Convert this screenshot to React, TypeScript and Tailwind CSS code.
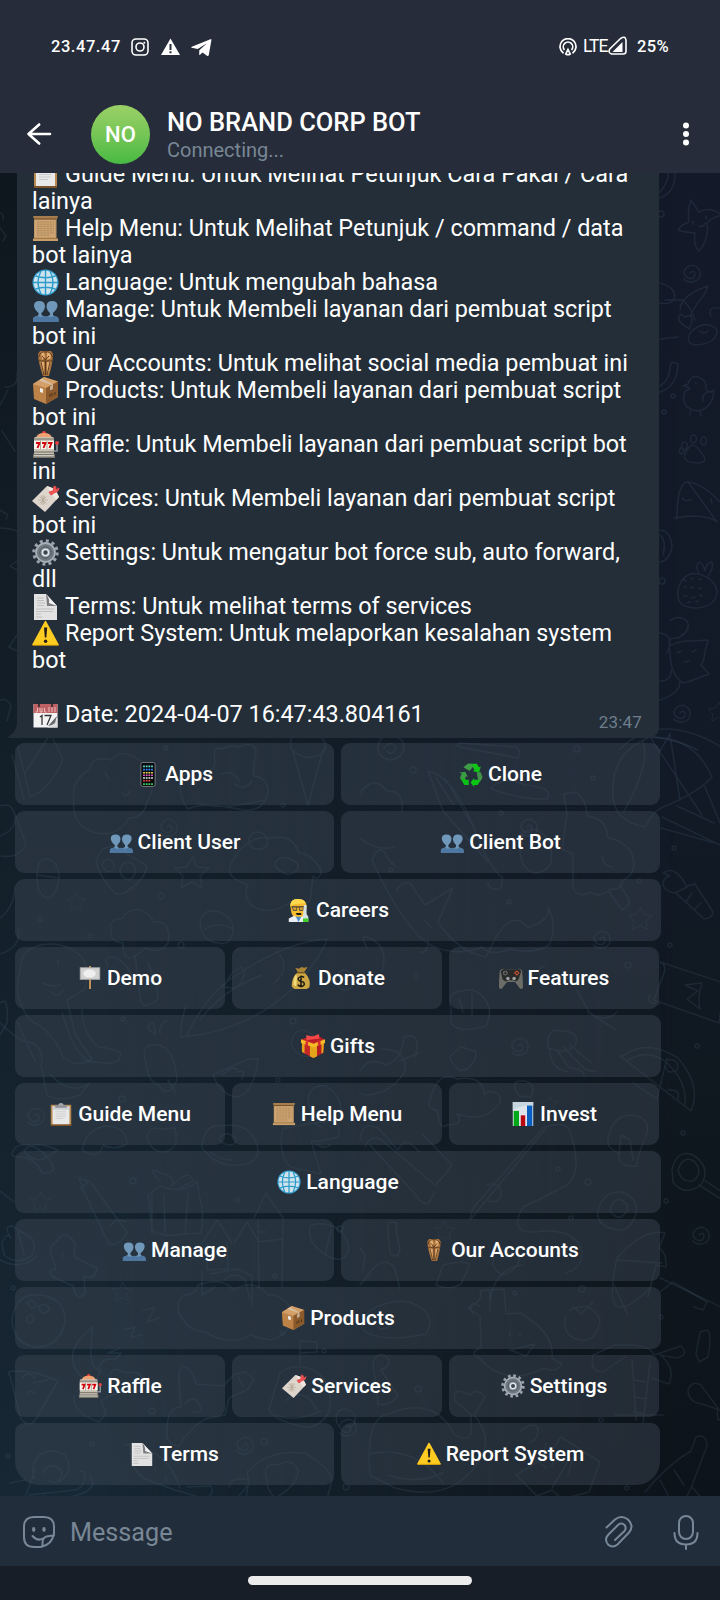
import type { ReactNode } from "react";

const emojis: Record<string, ReactNode> = {
  clipboard: (
    <>
      <rect x="2" y="3" width="23" height="24" rx="1" fill="#b98a50" />
      <rect x="2" y="25" width="23" height="2" fill="#7d532a" />
      <rect x="4" y="5" width="19" height="20" fill="#e9e9e9" />
      <path d="M4 5h19v4H4z" fill="#cfd0d3" />
      <path d="M7 11h12M7 13.5h12M7 16h12M7 18.5h9" stroke="#c2c2c2" strokeWidth="0.8" />
      <path d="M7 3.500h13v3H7z" fill="#8d9098" />
      <path d="M10.500 4a3 3 0 0 1 6 0z" fill="#a5a8b0" />
    </>
  ),
  scroll: (
    <>
      <path d="M2 2h22.500v23H2z" fill="#c39a66" />
      <path d="M3 5h20v17H3z" fill="#cda574" />
      <path d="M1 1h25l-1 3H2z" fill="#a67d4c" />
      <path d="M2 4h22" stroke="#6b4a26" strokeWidth="1" />
      <path d="M1 23.500h25V26H1z" fill="#c99f69" />
      <path d="M2 23.500h23" stroke="#8a6336" strokeWidth="0.6" />
      <path d="M5 7h17M5 9.200h17M5 11.400h17M5 13.600h17M5 15.800h17M5 18h17M5 20.200h13" stroke="#a07b4a" strokeWidth="0.7" strokeDasharray="2.500 0.700" />
    </>
  ),
  globe: (
    <>
      <circle cx="13.500" cy="13.500" r="13" fill="#39a3d3" />
      <circle cx="13.500" cy="13.500" r="11.800" fill="#cfe3ec" />
      <path d="M13.500 1v25M1 13.500h25M3.500 7q10 3.500 20 0M3.500 20q10-3.500 20 0M9 2Q3 13.500 9 25M18 2q6 11.500 0 23" fill="none" stroke="#2d9ccb" strokeWidth="1.400" />
    </>
  ),
  people: (
    <>
      <path d="M1 26v-3q0-2 4-3l1.500-1v-2Q2 13 2 9.500 2 5 7.500 5q5 0 5.500 5 0 4-3.500 7v2l4 2v5z" fill="#6f98bb" />
      <path d="M26.500 26v-3q0-2-4-3L21 19v-2q4.500-4 4.500-7.500Q25.500 5 20 5q-5 0-5.500 5 0 4 3.500 7v2l-4 2v5z" fill="#6f98bb" />
      <path d="M1 26v-3q0-2 4-3l4 1 4.500-1 4.500 1 4.500-1q4 1 4 3v3z" fill="#4e77a2" />
    </>
  ),
  urn: (
    <>
      <path d="M8 1h11l2 3q0 8-4 22h-6Q6 12 6 4z" fill="#a8713c" />
      <path d="M9 2h3l1 5-3 3zM15 2h3l1 6-4 2zM8 11l4 1v12h-1zM15 12l4-1-3 13h-1z" fill="#e2ad70" />
      <path d="M6.500 7q2-6 7-5 5-1 7 5M10 6l3.500 4L17 6M7 11h13M13.500 11v14M9 12l3 13M18 12l-3 13" stroke="#50311a" fill="none" strokeWidth="0.9" />
    </>
  ),
  box: (
    <>
      <path d="M1 7L12 0l14 4.500V20l-12 7L2 22z" fill="#bd8248" />
      <path d="M1 7L12 0l14 4.500L14 11z" fill="#d4a069" />
      <path d="M14 11l12-6.500V20l-12 7z" fill="#8b5a2c" />
      <path d="M7 3.500L20 8l-2 1.500v4l3-1.500V7.500L10 1.500z" fill="#d8cbb8" opacity=".75" />
      <path d="M8 11l3 1v4l-3-1z" fill="#eee" />
      <path d="M18 20v-3m2 2v-3m3 2v-3" stroke="#4c2e14" strokeWidth="1" />
    </>
  ),
  slot: (
    <>
      <circle cx="12" cy="2" r="2" fill="#ef4136" />
      <path d="M4 7q1-5 8-5t8 5z" fill="#f0a070" />
      <rect x="2" y="6" width="20" height="19" rx="1.500" fill="#c9c3b5" />
      <path d="M2 8h20M2 21h20" stroke="#6f6a5d" />
      <rect x="2" y="10" width="20" height="8" fill="#f7f4ee" />
      <path d="M4 12h3.500l-2 5M10 12h3.500l-2 5M16 12h3.500l-2 5" stroke="#d5000a" strokeWidth="1.900" fill="none" />
      <path d="M8.500 10v8M15 10v8" stroke="#85806f" strokeWidth=".7" />
      <path d="M22 20h3v-7" stroke="#9298a0" strokeWidth="1.500" fill="none" />
      <circle cx="25" cy="12" r="1.900" fill="#e33e40" />
      <path d="M1 23h22v4H1z" fill="#77756c" />
      <path d="M2 24h20v1.500H2z" fill="#c9c7bc" />
    </>
  ),
  tag: (
    <>
      <path d="M15 1l8 3 4 8-14 15L0 16z" fill="#ded6cd" />
      <path d="M15 1l8 3 4 8-3 3z" fill="#eee8e0" />
      <path d="M11 10v10M6 15h10M7.500 11.500l7 7M14.500 11.500l-7 7M9 10.500l4 9M13 10.500l-4 9" stroke="#b9ab99" strokeWidth=".8" />
      <path d="M17 7l4-1 1-5 2 1v3l3-2-1 3-4 2-3 2z" fill="#f15555" stroke="#e34949" />
    </>
  ),
  gear: (
    <>
      <circle cx="13.500" cy="13.500" r="11.700" fill="none" stroke="#9ba4ae" strokeWidth="3" strokeDasharray="3 3.120" />
      <circle cx="13.500" cy="13.500" r="9.500" fill="#6f7780" stroke="#a9b1b9" strokeWidth="1.800" />
      <circle cx="13.500" cy="13.500" r="5.500" fill="#8f9da9" stroke="#454b52" />
      <circle cx="13.500" cy="13.500" r="3" fill="#3a444d" stroke="#e2e7eb" strokeWidth="1.500" />
    </>
  ),
  page: (
    <>
      <path d="M2 1h12l11 12v14H2z" fill="#e2e2e2" />
      <path d="M14 1l11 12H15z" fill="#7b7d80" />
      <path d="M14 1q4 5 3 9l8 3z" fill="#f5f5f5" />
      <path d="M5 5h7M5 7.500h7M5 10h8M5 12.500h7M4 16h18M4 18.500h17M4 21h5M4 24h6" stroke="#b8b8b8" strokeWidth=".8" />
    </>
  ),
  warning: (
    <>
      <path d="M13.500 1.500L26 24.500H1z" fill="#ffcc22" stroke="#ffcc22" strokeLinejoin="round" strokeWidth="1.500" />
      <path d="M0.500 25h26" stroke="#eeb000" strokeWidth="1" />
      <path d="M12 7.500h3.200l-.8 10h-1.600z" fill="#211d1b" />
      <circle cx="13.600" cy="21.300" r="1.700" fill="#211d1b" />
    </>
  ),
  calendar: (
    <>
      <rect x="1.500" y="3" width="24" height="23.500" fill="#f3f3f3" />
      <path d="M1.500 3h24v9h-24z" fill="#bd6164" />
      <path d="M5.500 7v4h-2M8 7v4h2V7M12.500 7v4h2M17 6v5M20 6v5M23 6v5" stroke="#f2c7c4" strokeWidth=".9" fill="none" />
      <path d="M7 1v5M20 1v5" stroke="#27272a" strokeWidth="1.600" />
      <path d="M8 16l2-1.500V24M12.500 14.500H19L15 24" stroke="#333" fill="none" strokeWidth="1.300" />
      <path d="M15 26.500q8-2 10.500-10v10z" fill="#ddd" />
      <path d="M16 25l9-10-2 7-3 2z" fill="#66696d" />
    </>
  ),
  phone: (
    <>
      <rect x="5.500" y="0.500" width="16" height="27" rx="2" fill="#090a0d" stroke="#7e8389" />
      <path d="M8 5h12" stroke="#5ee0d2" strokeWidth="2" strokeDasharray="2 1" />
      <path d="M8 8.500h12" stroke="#2d8cff" strokeWidth="2" strokeDasharray="2 1" />
      <path d="M8 12h12" stroke="#f4de4e" strokeWidth="1.600" strokeDasharray="2 1" />
      <path d="M8 15h12" stroke="#e55ac8" strokeWidth="1.600" strokeDasharray="2 1" />
      <path d="M8 18h12" stroke="#f2f2f2" strokeWidth="1.600" strokeDasharray="2 1" />
      <path d="M8 21h8" stroke="#e84838" strokeWidth="1.600" strokeDasharray="2 1" />
      <path d="M8 25h12" stroke="#33d45f" strokeWidth="2" strokeDasharray="2 1" />
    </>
  ),
  recycle: (
    <>
      <path d="M10 2h10l2.500 4 2-1-2 7-7-2 2-1-3-5z" fill="#0fc417" />
      <path d="M6 5l4-3h4l2 3-4 5-7-4z" fill="#3f9c46" />
      <path d="M24 15l2 3-5 8h-4v2l-4-5 4-5v2h4z" fill="#0cc414" />
      <path d="M20 12l4-1 2.500 6-2 4-3-1z" fill="#43914a" />
      <path d="M11 20v6H6l-4-7h5l1 1z" fill="#0dbe17" />
      <path d="M0 12l7-1 3 6-2-1-1.500 3H2l-1-1 2-5z" fill="#3c9c43" />
    </>
  ),
  scientist: (
    <>
      <path d="M4 10Q3 1 12 1q10 0 10 9l-1 7q-3 6-8 6-6 0-8-6z" fill="#f6bd2f" />
      <path d="M4 10Q3 1 12 1q8 0 9 5L7 7z" fill="#ffd94d" />
      <path d="M5 10h15" stroke="#604422" strokeWidth="1.500" />
      <path d="M6 10h5v4H7zM14 10h5l-1 4h-4z" fill="#d99d2c" stroke="#49494b" />
      <path d="M10 17h6v2h-5z" fill="#1b1716" />
      <path d="M2 27v-4l6-3 5 3 5-3 5 3v4z" fill="#e9edf2" />
      <path d="M10 21l3 6 3-6" fill="#4d91cb" />
      <path d="M19 8h3v10l2 3v6h-6v-7z" fill="#d5e0e2" />
      <path d="M18 23h6v4h-6z" fill="#41d12a" />
    </>
  ),
  placard: (
    <>
      <path d="M13.500 0v26" stroke="#c49358" strokeWidth="2.200" />
      <rect x="2.500" y="2" width="22" height="13" fill="#d2d2d2" stroke="#a9a9a9" />
      <ellipse cx="13" cy="8.500" rx="7" ry="4.500" fill="#efefef" />
    </>
  ),
  money: (
    <>
      <path d="M7 2l4 1 3-2 3 1 4-1-4 6h-7z" fill="#ad8635" />
      <path d="M9 8h9q7 7 5 16l-3 2H6l-3-3Q3 13 9 8z" fill="#cda644" />
      <path d="M8 9q-3 4-3 12l3 2 1-10z" fill="#f1dc79" />
      <path d="M9 7.500h9" stroke="#6e5420" strokeWidth="1.500" />
      <path d="M17 13q-2-2-5-.5t-1 3.500 5 2q3 3-1 5-4 0-5-2M13.500 11v13" fill="none" stroke="#1d1b15" strokeWidth="1.700" />
    </>
  ),
  gamepad: (
    <>
      <path d="M1 5q3-3 7-1h11q4-2 7 1 1 11 1 20l-3 1-6-8H9l-6 8-3-1Q0 12 1 5z" fill="#6b6d66" />
      <path d="M2 6q3-4 7-2h9q5-2 7 2l-3 9q-3 4-6 1h-5q-4 3-7-1z" fill="#292b29" />
      <circle cx="7" cy="8" r="2.700" fill="#74797a" />
      <path d="M7 6v4M5 8h4" stroke="#202020" />
      <circle cx="20" cy="8" r="2.700" fill="#ca5634" />
      <path d="M18 6l4 4M22 6l-4 4" stroke="#2b2725" />
      <circle cx="10" cy="14" r="2" fill="#9da1a1" />
      <circle cx="17" cy="14" r="2" fill="#9da1a1" />
    </>
  ),
  gift: (
    <>
      <path d="M1 6l12-4 13 4-1 15-11 6-12-6z" fill="#c52626" />
      <path d="M14 11v16l11-6 1-15z" fill="#b51e22" />
      <path d="M1 8l3 2v12l-3-2zM10 12l4 1 4-1v13l-4 2-4-2zM23 9l3-1-1 13-2 1z" fill="#e5a51b" />
      <path d="M0 6v4l14 5 13-5V6L14 11z" fill="#f5bc28" />
      <path d="M5 9l3-2v6l-3-1zM19 7l3 1v4l-3 1z" fill="#d92d31" />
      <path d="M4 6l6-2 4 1 7-2 4 2-7 3-4 1z" fill="#b71d26" />
      <path d="M6 1l7 2 7-3 1 5-7 1-8 1z" fill="#f34949" />
    </>
  ),
  chart: (
    <>
      <path d="M2 0h23v27H2z" fill="#dce5eb" />
      <path d="M2 0h23v4q-13-1-23 5z" fill="#c6d5df" />
      <path d="M3 10h6v17H3z" fill="#00a818" />
      <path d="M11 15h5v12h-5z" fill="#b90812" />
      <path d="M18 4h6v23h-6z" fill="#075fc1" />
    </>
  ),
};

function Emoji({ name, className }: { name: string; className: string }) {
  return (
    <svg viewBox="0 0 27 27" className={`${className} shrink-0 overflow-visible`} aria-hidden="true">
      {emojis[name]}
    </svg>
  );
}

const lines: { icon?: string; text: string }[] = [
  { icon: "clipboard", text: "Guide Menu: Untuk Melihat Petunjuk Cara Pakai / Cara" },
  { text: "lainya" },
  { icon: "scroll", text: "Help Menu: Untuk Melihat Petunjuk / command / data" },
  { text: "bot lainya" },
  { icon: "globe", text: "Language: Untuk mengubah bahasa" },
  { icon: "people", text: "Manage: Untuk Membeli layanan dari pembuat script" },
  { text: "bot ini" },
  { icon: "urn", text: "Our Accounts: Untuk melihat social media pembuat ini" },
  { icon: "box", text: "Products: Untuk Membeli layanan dari pembuat script" },
  { text: "bot ini" },
  { icon: "slot", text: "Raffle: Untuk Membeli layanan dari pembuat script bot" },
  { text: "ini" },
  { icon: "tag", text: "Services: Untuk Membeli layanan dari pembuat script" },
  { text: "bot ini" },
  { icon: "gear", text: "Settings: Untuk mengatur bot force sub, auto forward," },
  { text: "dll" },
  { icon: "page", text: "Terms: Untuk melihat terms of services" },
  { icon: "warning", text: "Report System: Untuk melaporkan kesalahan system" },
  { text: "bot" },
  { text: "" },
  { icon: "calendar", text: "Date: 2024-04-07 16:47:43.804161" },
];

const rows: [string, string][][] = [
  [["phone", "Apps"], ["recycle", "Clone"]],
  [["people", "Client User"], ["people", "Client Bot"]],
  [["scientist", "Careers"]],
  [["placard", "Demo"], ["money", "Donate"], ["gamepad", "Features"]],
  [["gift", "Gifts"]],
  [["clipboard", "Guide Menu"], ["scroll", "Help Menu"], ["chart", "Invest"]],
  [["globe", "Language"]],
  [["people", "Manage"], ["urn", "Our Accounts"]],
  [["box", "Products"]],
  [["slot", "Raffle"], ["tag", "Services"], ["gear", "Settings"]],
  [["page", "Terms"], ["warning", "Report System"]],
];

const rowWidths = ["", "w-[646px]", "w-[645px]", "w-[644px]"];

const swirls = [
  [690, 273], [680, 713], [527, 827], [167, 827], [600, 939], [34, 1116], [518, 1046], [699, 1235],
  [243, 1445], [346, 1427],
];
const stars = [
  [193, 873, 1], [77, 902, 0.55], [641, 919, 0.7], [41, 1202, 0.6], [123, 1292, 0.6], [445, 1231, 0.6], [719, 712, 0.6], [550, 1104, 0.5],
];
const dots = [
  [661, 214], [673, 396], [664, 412], [662, 581], [166, 748], [283, 805], [577, 749], [593, 778], [501, 813], [413, 770],
  [674, 848], [391, 870], [161, 896], [40, 919], [90, 936], [181, 945], [509, 902], [670, 945], [628, 965], [416, 976], [123, 1019],
  [293, 1021], [639, 881], [278, 1080], [122, 1099], [697, 1046], [683, 1133], [133, 1181], [238, 1200], [558, 1169], [588, 1182],
  [666, 1201], [571, 1218], [340, 1229], [13, 1288], [275, 1276], [582, 1289], [282, 1333], [324, 1351], [152, 1411], [92, 1444],
  [8, 1456], [264, 1442], [661, 1317], [601, 1420], [346, 1487], [627, 1488], [515, 1293], [418, 1389],
];

const doodles = [
  // right edge
  "M660 198q16-6 15-27M668 170q2 10-8 22",
  "M691 200l8 12q10-6 23 3-11 3-15 8 2 17-8 28-6-6-4-18-9 0-17-3 3-5 11-8-2-12 2-22zM693 221v3M706 216v3M699 226q4 2 6-3",
  "M660 283q18 5 14 17-5 5-14 3M665 300h18q8 7 12 20M680 310q1-15 28-24-2 8-10 16-5 9-8 14M660 339l18-2M695 345q-10-2-5-12 13-14 27-4 1 15-22 16zM690 329q-16-8-9-15l4 3 6-2q2 7-1 12M700 331q4 4 8 0M711 316q-4-10 9-8",
  "M660 392q17-5 18-28-7-4-8 2 0 14-10 20",
  "M688 384q2-9 10-7 9 2 8 13 5 4 8 0-1 19-17 21-16-3-13-17 2-5 6-5l-2-2-5-1zM696 382v2M690 411v4M700 411l1 5M713 391q-12 1-10 10",
  "M686 452q6-13 14-1 11 12-3 12-17-1-11-11zM684 442a3 4 0 1 0 1 0M693 435a3 4 0 1 0 1 0M703 437a3 4 0 1 0 1 0M681 448a2 3 0 1 0 1 0",
  "M677 519q0-39 12-37 14 2 31 20M688 482q21 29 29 40-7-6-27-6l-16 2M682 498q4 5 9 1M711 499l1 4",
  "M678 590q5-19 21-16 18 6 18 19-2 14-21 15-21 0-18-18zM698 572q-3-8 2-10 3 2 5 9 1-8 7-9 2 6-4 14M684 580l2 1m5-3l2 1m6 0l2 1m-17 8l2-2m5 2l2-1m6 2l2-1m-17 8l3 0m5 2l3-1m5-2l2 1m-15 7l3-1m6 0l2-1",
  "M660 530q11 1 12 17-3 14-12 15M660 535q7 6 3 20",
  "M670 653l-1-7q14-6 24-5l15-1-3 12q-1 10-4 13l8 9-8 3q-12 5-18 6-12-7-13-30zM677 653l4-2M685 662l4-1M692 652l4-2M670 645q-4-8 8-7 14-8 9-17-9-7-17 0M660 633q15 2 7 20M660 681q12 0 11-11M660 700q20-7 20-18",
  "M620 749q40-40 105 0M660 751l10-17M600 737q60-6 98 13",
  // balloons and umbrellas by the first rows
  "M613 785q2-34 37-48 44-1 62 40-12 14-44 28-14 4-23 22-36-6-32-42zM643 741q8 23-20 72M650 737l52 78M670 735l10 65M662 817l60 29M705 787l15 36M677 806l37 17M661 828l61 17",
  "M12 755l12 44M0 806q11-4 14 7 5 15-14 23M15 814l11 30q-7 15-25 12",
  "M18 747l12 50q21-8 33-38l-10-20M25 773l24-37",
  "M74 801q-4-20 16-32 2-14 21-9 11-13 28 0 13 3 14 22-1 12-6 20-3 16-18 16-12 21-36 14-22-8-19-31zM105 772l5 9M122 793q4 6 9-2",
  "M215 762q-3-18 7-13 10-5 18-2 13-6 16 3-3 18-2 26 14 2 14 16-4 20-25 18-39-9-55-1-9-12-8-27 4-14 19-9 16-1 16-11M222 774q12-5 17 8M235 784q9 8 17-3M198 803q25 8 65-3",
  "M291 749q-3-19 13-17 10-4 15 4 11 7 3 18-16 9-31-5zM293 752l15 53 15-55",
  "M360 793q14-19 27-2 17-1 15 20M360 838q17 14 34 9M378 747q2-13 14-12 15 4 11 17-9 12-19 6-7-4-6-11zM384 748q7-9 12 0-4 9-9 3",
  "M428 771q30 7 54 78 14 25 20 28 2 15-9 12-5-2-5-6M428 771l15 40 45 51M445 778l30 52M436 778l17 26",
  "M460 743l56 4q5 2 2 11l-58-11q-5-2 0-4zM490 788q15-13 35-3 30 3 22 14-29 1-57-11zM512 770l7 8 10-6",
  "M564 794l3 20-5 35 11 5v34q6 11 18 4 8 7 20-3 10 2 12-9 15-6 9-26-6-12-25-17 1-18-20-21 0-16-11-24zM608 890l14 20q8-4 7-11l-10-15M613 867q-11-1-10-10",
  "M520 846q2-20 16-16 19 7 15 33-6 10-17 10-15-5-14-27z",
  "M96 862q5-18 20-15l31 19q-3 15-21 26-7 4-12 0-14-14-18-30zM102 865q2-7 8-5 7 4 3 10-7 5-11-5zM120 870q4-13 14-5 4 11-5 15-9-2-9-10z",
  "M37 875q0-17 11-16 11 3 11 19-3 20-12 20-11-4-10-23zM37 875l22 3",
  "M231 864q15-30 40-26 21-5 28 15 12 0 22 17-1 12-8 6l-3 25q-10 7-14-3-25 21-45 7-8-10-3-20-24-8-17-21zM250 846q-4-14 9-14 12 4 7 15-9 5-16-1zM275 866q1-10 13-8 14 6 9 12-10 10-22-4z",
  "M663 873q12-9 24 14l-12 6q-9-1-12-8 0-8 7-9zM687 886l8-2 18 28q0 6-9 7l-28-26M692 893l-6 9M701 903l-7 7",
  "M396 891q6-10 14-8l15 22 28-17-15 34q20 30 48 35l10-20q18-28 32-9 22-8 20-20 10 17 1 37-16 10-39 4-19 8-28-2-24 10-50-1-28-16-60-86 8-20 16-1l8 8M424 920l7 7M420 952q8 2 8-12",
  "M111 931q-3-12 12-13 4-10 18-8 12 6 12 12 19-2 15 21-9 12-23 5-22 22-22-5-14-2-12-12zM135 955l5 42q2 13 12 6 9-2 4-17l-8-23M108 966q-6-10 5-9 17 6 20 25",
  "M200 921q5-14 19-9 16 6 14 20-3 14-14 11-18-1-19-22zM205 929q13-8 28 0",
  "M186 1037q16-34 40-55 59-41 101-43-3 12-25 40-48 52-121 58-2-8 5-32M200 1020q22-30 62-45M232 973l9-6q7 5-1 17l-5 4-12-1zM280 955q10 15-6 28",
  "M20 971q0-28 34-27 31 4 33 29l-2 16-18 11 8 34 17 25q-16 10-29-2-11-27-32-36-20-25-11-50zM58 959v5M42 983q14 5 19 1M50 991q10 9 13-2",
  "M336 981q2-14 12-10 11 8 3 17-11 6-15-7zM367 948q-9-16 5-9 17 10 10 32",
  "M650 995q-5 9 10 9M660 962q7 3 4 11l-10 27 65 23 5-40-61-20M685 985l17-2q-5 13-2 26l-13-10 11-8z",
  "M577 990l12 22q17 12 28 0M588 1012l28 18M540 976q-3-8 4-10",
  "M451 1009q-5-18 12-18 13-5 23 10 7 10 0 25-28 8-35-3zM459 999l4 13M472 994v21",
  // middle area
  "M0 1023q17 16 24 18 22 4 17 24l6 30q11 8 33 0l10-12M17 1022l18 39",
  "M62 1013q15 50 32 49 25 4 26-6 5-6-22-9-16-15-16-37M50 1074q20 22 38 10",
  "M147 1067q-9-26 12-22 16 5 18 35-9 20-18 5-10-2-12-18zM168 1080l8 13M156 1034q-15-8-3-11zM160 1034q-1-10 7-14",
  "M213 1075l35-16q10 1 10-1-3 33-20 39-17-1-25-22zM222 1075q14-12 16-3 8-4 4 7",
  "M291 1044q3-17 16-13 16 10 9 23-17 8-25-10zM308 1100q2-16 18-14 18 12 14 28-16 10-29 1zM287 1128q20-4 36-6 20-5 15 15-18 5-27 4l10 33-31-7q-13-15-7-39zM315 1124l6 3M316 1144q10 6 15 0",
  "M360 1093q5 5 24-2 24-14 21-28-3-14-24-14M360 1071q8-15 26-6 16-5 18-28 18-6 11 20M400 1061l19-8",
  "M451 1055l10-8 14 4q4 8-9 19l-7 0q-12-12-8-15z",
  "M548 1048q-2-21 13-17 20 0 14 15-10 9-27 2zM550 1050q0 18 18 22M557 1050l12 18q15 1 15 7M563 1047l17 17q5 8 16 7M570 1045l21 18",
  "M623 1056q23-18 55 2 24 28 13 53l-71-55zM628 1060q23-12 40 4 19 18 17 40M667 1058l-10 41-24-16M667 1060q13-2 10 10-10 5-11-3M668 1090q13-1 10 9",
  "M430 1101q-5 6 8 10 1 20 9 14 18 0 10-11 19 6 30 0 20-12 10-21-9-4-13 2 0-20-27-16-20-10-27 22z",
  "M519 1096q-11-17 6-15 12 4 6 16zM609 1135q6-24 29-19 16 7 5 27-6 15-6 23-20 2-18-13-15-5-10-18zM619 1155l2-20 9 5 3 20",
  "M365 1147q7-16 20-4l50 42q12-12 17-20l-30-31M360 1140q2-20 18-12l20 22q7-16 21 2M370 1145l45 49q13 20 19-2",
  "M470 1220l78-94q15-4 21 3 16 45-4 57-28 15-42 21-15 26 12 25 36-5 46 16 5 18-15 25M470 1220l3-12 72-82M487 1200a9 9 0 1 0 1-15",
  "M598 1211q4-20 24-19 17 6 14 22-7 20-22 15-18-4-16-18zM610 1211q2-13 11-11 10 5 5 12-7 11-16-1z",
  "M24 1151q9-12 34-1l-16 10q-12 0-18-9M15 1148q8-7 21 0 14 8 18 21-2 5-12 4-8-17-24-16-10 0-3-9",
  "M147 1139q2-14 13-10l15-1q4 18-5 22-15 7-23-11zM82 1150q4-22 25-24 20 1 20 18-14 7-24 1-4 16-21 5z",
  "M203 1142q2-18 19-16 25-4 33 14 9 18-9 24-26 5-39-11-8-5-4-11zM219 1139q4-8 12-4 9 4 3 9-9 3-15-5zM210 1152q12 9 22 8",
  "M79 1178l11 4 37 50q-7 15-18 12l-25-52zM88 1182l-8 7M110 1226q7-9 16-4",
  "M148 1195l12-9q24 9 37-5l2 14q6 17 2 38l-18 1q-16 4-31-3l-3-31zM160 1182q-15-17 1-9 17 4 10 13M173 1185q16-17 20-4l-13 7M152 1195v39M164 1194l1 39M188 1192l-3 42",
  "M11 1238q-8-12 1-12l13 8q13 6 8 20-14 13-29 1l-2-11q4-13 9-6zM0 1260q20 11 37-4M18 1230l6 25",
  "M54 1262q-8-15 3-21 8-13 18 2l-1 14 23 11q-1 12-13 8l1 18q-9 8-12-8l-20-9q-7-8 3-8zM63 1255v2",
  "M202 1243l15-23 15 23M207 1244v26l21-1-1-26M234 1243l13-21 12 20M254 1218l12-25 17 25-1 70M258 1220l1 68M202 1270v25l13-8M210 1274l28-5 14 7v30M225 1280q10-10 20 0l5 19M258 1242l24-3M259 1232h7",
  "M310 1235q-3-13 12-11 23 1 27 25-4 15-20 8-19-12-19-22zM331 1230l-6 25",
  "M388 1226q-1-6 9-3l-1 8 4 18-2 7q-9 0-8-6l-2-16zM360 1248l5 7-2 15M436 1285l7-20q20-5 27-1l-9 20q-12 7-25 1z",
  "M493 1265q-1-19 15-13 14-2 10 12-16 20-25 1zM490 1300q5-32 33-35",
  "M617 1258q27-30 48-25l-6 15q8 5 7 19l-10-2-8 32M617 1258q-18 80 33 30M660 1278l61 29M617 1260l45 3",
  "M672 1169q5-20 21-14 19 12 8 30-17 12-28-3zM678 1170q5-15 16-9 10 12-1 20-12 2-15-11zM704 1180l18 12M699 1185l22 14",
  // bottom rows
  "M12 1318q5-26 27-23 27 2 26 28-7 25-30 24-23-4-23-29zM27 1303q4-5 8 0 2 5-4 5zM38 1307q7-6 11 1 0 5-7 5zM27 1317q5-5 7 2-3 6-7 3z",
  "M93 1327q-40 30-2 58l5-4 5-11q-15 1-8-43zM99 1368q4-12 16-8l6-7h-13l12-5M124 1330l11-3-4 10 11-2M143 1310l12-2-8 14 12-4",
  "M181 1317q-7-14 3-22 12 0 14-10 25-9 35 5 22-12 35 5 18-1 25 20-3 20-22 25-20-3-19-6-21 14-49-3-10 3-22-14z",
  "M10 1376l11 43q9 10 15 0l22-38q-21-10-43-10-10 0-5 5zM22 1378q5-8 13 0M27 1394q3-6 8 0M33 1383q16-3 16-4",
  "M110 1378q0-14 15-5 15-3 17 6 2 15-9 12-18 0-32 10l5 13-7 8q-28-11-25-26",
  "M180 1392q-3-24 3-26 10 3 13 18l27 2 12-12 10-2 9 7-6 10-19 9-4 17-20 4q-18 12-26 27-14 0-12-19 1-20 14-20zM185 1403q11-9 14 2 6 8-7 7M238 1376l5 11",
  "M269 1409l11-36q12-11 33-3 22 12 16 42-13 22-36 12-20-5-24-15zM300 1365v-24l17 1v10l-17 1M283 1390l19-8M276 1415q18 8 45-4M285 1401q20-16 32 9",
  "M339 1426q-6-6 0-15 8-5 15 3 4 9-5 14M375 1378l-2-14q3-13 13-8 8 8-5 14l17 26q-10 11-20 8z",
  "M360 1285l12-15q14-15 23-1l5 20M370 1310q-9 10-8 19 17 15 64 5 9-15-3-25-20-16-53 1zM375 1323q1-12 12-8 7 13-3 14-6 1-9-6z",
  "M468 1308q16-8 12-17l24-2 2 25 14-1q35 20 32 45 6 5 10 5-5 11-18 5-38 20-65-10-11-6 2-10 0-15-1-32zM480 1306q-13-7-7 8M490 1290v22M510 1332v4M520 1333v2M510 1350l25-6-9 12z",
  "M570 1310q22-10 30 10-3 22-19 20-18-2-16-23M573 1306l8 8 12-12M614 1285l14 30M660 1292l13-10 34 20-4 8-9-3",
  "M593 1355l22-10q35-2 39 10l27-9q9 9-5 12l-16-3q16 12 9 29l-17-6M593 1355q-4 17 10 17l22-15M632 1360l4 60M650 1363l-7 60M634 1380l11 2M634 1397l12 2M634 1412l11 2M615 1415h48",
  "M700 1332l8-2q4 8 0 27l-9 5-3-8zM688 1390q4-10 13-5l19 26q9-1 8 8l-10 1-1-11-15-5q-14-2-14-14z",
  "M370 1475q-5-57 18-61 46-19 66 20 12 9 17 0v-20l-16-13q-4-16 15-6 7-8 15 2-7 12-11 18 17 20 9 38-25 52-88 35zM369 1454q45-10 75 30M388 1475q30 10 55-2",
  "M516 1475l32-19 13-19 39 25-11 30-27 7-10-9-15 6zM531 1457l16 11M546 1443l-4 18M558 1450l-6 16M573 1458l-5 17M520 1431q14-10 18-3 0 13-8 14M552 1488l18-30",
  "M645 1492q22-27 46-41l5-14q10-4 11 9l-16 42-4 8M660 1480l8 15M674 1470l10 15M692 1487l8 9",
  "M34 1478q-5-22 15-27 21-1 20 19-7 16-20 11M43 1473q4-10 14-6 9 5 2 13M29 1495l46-5q10-2 10-18l-4-1M90 1474l3 11q-11 16-50 11M10 1483l15-3M35 1470l-9 25",
  "M130 1445q0 25 15 34l30 11q18 5 28 9 13-4 8-13l-24 1M140 1446q30 10 40 42M155 1467v4M166 1477v4M125 1445l10-2",
  "M239 1496l10-12q-3-17 0-13 19-22 56-18 25 15 27 27l-5 19M267 1481q-6-20 12-16 10-8 19 4 1 16-23 29-9-10-8-17zM229 1487q1-11 20-7l-3 18",
  // left edge
  "M0 1003q9-8 7 20l-7 12M0 918q14-10 15-31M0 954q22-7 18-25M0 1191l14 11M0 213q4 0 3 7M0 228l6 8-3 5M0 405l8-15M5 387q14 1 12-15M2 431l13 20M0 510l8 5-2 4M0 528q10 0 17 3M17 561l-7 5 7 4M17 635l-8 12 8 4M0 700q7-2 11 6l-4 15",
];

function Wallpaper() {
  return (
    <svg viewBox="0 173 720 1323" className="absolute inset-0 h-full w-full" aria-hidden="true">
      <defs>
        <linearGradient id="left" x1="0" y1="0" x2="0" y2="1">
          <stop offset="0" stopColor="#0f171e" />
          <stop offset="0.45" stopColor="#131f29" />
          <stop offset="1" stopColor="#172733" />
        </linearGradient>
        <linearGradient id="right" x1="0" y1="0" x2="0" y2="1">
          <stop offset="0" stopColor="#131928" />
          <stop offset="0.45" stopColor="#121a27" />
          <stop offset="0.75" stopColor="#0f171e" />
          <stop offset="1" stopColor="#0d131a" />
        </linearGradient>
        <linearGradient id="across">
          <stop offset="0.15" stopColor="#000" />
          <stop offset="0.95" stopColor="#fff" />
        </linearGradient>
        <mask id="blend">
          <rect y="173" width="720" height="1323" fill="url(#across)" />
        </mask>
      </defs>
      <rect y="173" width="720" height="1323" fill="url(#left)" />
      <rect y="173" width="720" height="1323" fill="url(#right)" mask="url(#blend)" />
      <g fill="none" stroke="#5d7b98" strokeOpacity="0.16" strokeWidth="1.500" strokeLinecap="round" strokeLinejoin="round">
        {doodles.map((d, i) => (
          <path key={i} d={d} />
        ))}
        {swirls.map(([x, y], i) => (
          <path key={i} transform={`translate(${x} ${y})`} d="M0 0q4-4 5 1 0 6-7 4-7-4-2-10 7-6 13 1 4 11-7 13-6 0-8-3" />
        ))}
        {stars.map(([x, y, s], i) => (
          <path key={i} transform={`translate(${x} ${y}) scale(${s})`} d="M0-16l4 10 12 1-9 8 2 12-10-6-11 6 2-12-8-8 11-1z" />
        ))}
        {dots.map(([x, y], i) => (
          <circle key={i} cx={x} cy={y} r={i % 3 ? 2 : 3} />
        ))}
      </g>
    </svg>
  );
}

function StatusBar() {
  return (
    <div className="flex h-[94px] items-center px-[51px] text-[16.5px] font-medium leading-none text-white">
      <span className="w-[80px] pt-px tracking-[0.55px]">23.47.47</span>
      <svg className="size-[18px] shrink-0" viewBox="0 0 18 18" fill="none" stroke="white" strokeWidth="1.600">
        <rect x="1" y="1" width="16" height="16" rx="4" />
        <circle cx="9" cy="9" r="4" />
        <circle cx="13.300" cy="4.700" r="1" fill="white" stroke="none" />
      </svg>
      <svg className="ml-[12px] h-[18px] w-[19px] shrink-0" viewBox="0 0 19 18">
        <path d="M9.500.5L19 17H0z" fill="white" />
        <path d="M8.500 6h2v6h-2zM8.500 13.300h2v2h-2z" fill="#262c39" />
      </svg>
      <svg className="ml-[11px] mt-[2px] h-[18px] w-[21px] shrink-0" viewBox="0 0 21 18">
        <path d="M20.500.6L17.800 16q-.4 1.600-1.800.8l-4.500-3.300-2.400 2.300q-.8.700-.9-.6l.1-4 7.700-7-9.300 5.900L.6 8.700q-.8-.4.200-.9L19.400.3q1.100-.4 1.100.3z" fill="white" />
      </svg>
      <div className="grow" />
      <svg className="size-[18px] shrink-0" viewBox="0 0 18 18" fill="none" stroke="white" strokeWidth="1.700">
        <path d="M4.500 15.200A8 8 0 1 1 13.500 15.200M5.500 12A4.700 4.700 0 1 1 12.500 12M9 11.500l2.200 4.500q-2.200 1.400-4.400 0z" />
      </svg>
      <span className="ml-[6px] w-[25px] text-[17.5px] font-normal tracking-[-1px]">LTE</span>
      <svg className="mb-[2px] h-[20px] w-[20px] shrink-0" viewBox="0 0 20 20">
        <path d="M12.800 2.300L2 12.800q-2.500 3.500 1.500 5.200h11.700q2.800 0 2.800-2.800V4q-.7-4.600-5.200-1.700z" fill="none" stroke="white" strokeWidth="1.600" />
        <path d="M14.500 6v10H4.500z" fill="white" />
      </svg>
      <span className="ml-[9px] pt-px tracking-[0.4px]">25%</span>
    </div>
  );
}

function ChatHeader() {
  return (
    <div className="flex h-[79px] items-start">
      <svg className="ml-[26px] mt-[28px] h-[24px] w-[26px] shrink-0" viewBox="0 0 26 24" fill="none" stroke="white" strokeWidth="2.600" strokeLinecap="round" strokeLinejoin="round">
        <path d="M24 12H2.500M13.200 2.500L2.500 12l10.700 9.500" />
      </svg>
      <div className="ml-[39px] mt-[11px] flex size-[59px] shrink-0 items-center justify-center rounded-full bg-linear-to-b from-[#9bd067] to-[#46ba43] text-[22px] font-medium text-white">
        NO
      </div>
      <div className="ml-[17px] mt-[13px] grow whitespace-nowrap">
        <div className="text-[25.5px] font-medium leading-[30px] text-white">NO BRAND CORP BOT</div>
        <div className="text-[20px] leading-[27px] text-[#788795]">Connecting...</div>
      </div>
      <svg className="mr-[30px] mt-[28px] h-[24px] w-[8px] shrink-0" viewBox="0 0 8 24" fill="white">
        <circle cx="4" cy="3.500" r="3" />
        <circle cx="4" cy="12" r="3" />
        <circle cx="4" cy="20.500" r="3" />
      </svg>
    </div>
  );
}

function Message() {
  return (
    <div className="relative ml-[17px] w-[642px] shrink-0 rounded-br-[10px] bg-[#232e39] pb-[10px] pl-[15px]">
      {lines.map((line, i) => (
        <div key={i} className="flex h-[27px] items-center whitespace-pre text-[23.4px] leading-[27px] text-white">
          {line.icon && <Emoji name={line.icon} className="mr-[6px] size-[27px]" />}
          <span>{line.text}</span>
        </div>
      ))}
      <svg className="absolute -left-[9px] bottom-0 h-[14px] w-[10px]" viewBox="0 0 10 14" aria-hidden="true">
        <path d="M9 0h1v14H1q-2-1 1-2.500Q8 7 9 0z" fill="#232e39" />
      </svg>
      <span className="absolute bottom-[6px] right-[17px] text-[17px] leading-[20px] tracking-[0.2px] text-[#6f7e8c]">23:47</span>
    </div>
  );
}

function Keyboard() {
  return (
    <div className="mb-[11px] ml-[15px] mt-[5px] flex shrink-0 flex-col gap-[6px]">
      {rows.map((row, i) => (
        <div key={i} className={`flex h-[62px] gap-[7px] ${rowWidths[row.length]}`}>
          {row.map(([icon, label], j) => {
            const last = i === rows.length - 1;
            const corner = last ? (j === 0 ? "rounded-bl-[24px]" : "rounded-br-[24px]") : "";
            return (
              <button
                key={label}
                className={`flex flex-1 items-center justify-center rounded-[9px] bg-[#3d4a56]/45 text-[21px] font-medium leading-[25px] text-white ${corner}`}
              >
                <Emoji name={icon} className="mr-[5px] size-[24px]" />
                <span className="whitespace-nowrap">{label}</span>
              </button>
            );
          })}
        </div>
      ))}
    </div>
  );
}

function Composer() {
  return (
    <div className="flex h-[70px] items-center bg-[#222d3b] text-[#788795]">
      <svg className="ml-[22px] mt-[2px] size-[34px]" viewBox="0 0 34 34" fill="none" stroke="currentColor" strokeWidth="2" strokeLinecap="round">
        <path d="M12 2h10q10 0 10 10v6.500Q30 30 18.500 32H12Q2 32 2 22V12Q2 2 12 2z" />
        <path d="M10.500 21q5.500 6 11.500 2M20.500 31.500v-4q0-6 6.500-6.500l5-.5" />
        <ellipse cx="11.700" cy="14.500" rx="1.700" ry="2.400" fill="currentColor" stroke="none" />
        <ellipse cx="22" cy="14.500" rx="1.700" ry="2.400" fill="currentColor" stroke="none" />
      </svg>
      <span className="ml-[14px] grow pt-[3px] text-[25.2px]">Message</span>
      <svg className="mt-px h-[34px] w-[30px]" viewBox="0 0 30 34" fill="none" stroke="currentColor" strokeWidth="2" strokeLinecap="round">
        <path d="M2.500 12.500L11 4.500q6.500-5 13 0 6.500 6.500 1 13L13.500 29.500q-5 4-9.500 0-4-5 0-9.500L14.500 9.500q3.500-2.200 6 .5 2.500 3-.2 6.200L11 25" />
      </svg>
      <svg className="ml-[39px] mr-[21px] mt-[2px] h-[36px] w-[26px]" viewBox="0 0 26 36" fill="none" stroke="currentColor" strokeWidth="2" strokeLinecap="round">
        <rect x="6" y="2" width="14" height="23" rx="7" />
        <path d="M1.500 19q0 11.500 11.500 11.500T24.500 19M13 30.500V35" />
      </svg>
    </div>
  );
}

export default function App() {
  return (
    <div className="flex h-[1600px] w-[720px] flex-col overflow-hidden bg-[#171e27] font-['Roboto',sans-serif]">
      <header className="h-[173px] shrink-0 bg-[#262c39]">
        <StatusBar />
        <ChatHeader />
      </header>
      <main className="relative h-[1323px] shrink-0 overflow-hidden">
        <Wallpaper />
        <div className="relative flex h-full flex-col justify-end">
          <Message />
          <Keyboard />
        </div>
      </main>
      <Composer />
      <div className="flex h-[34px] justify-center pt-[10px]">
        <div className="h-[9px] w-[224px] rounded-full bg-[#ececec]" />
      </div>
    </div>
  );
}
